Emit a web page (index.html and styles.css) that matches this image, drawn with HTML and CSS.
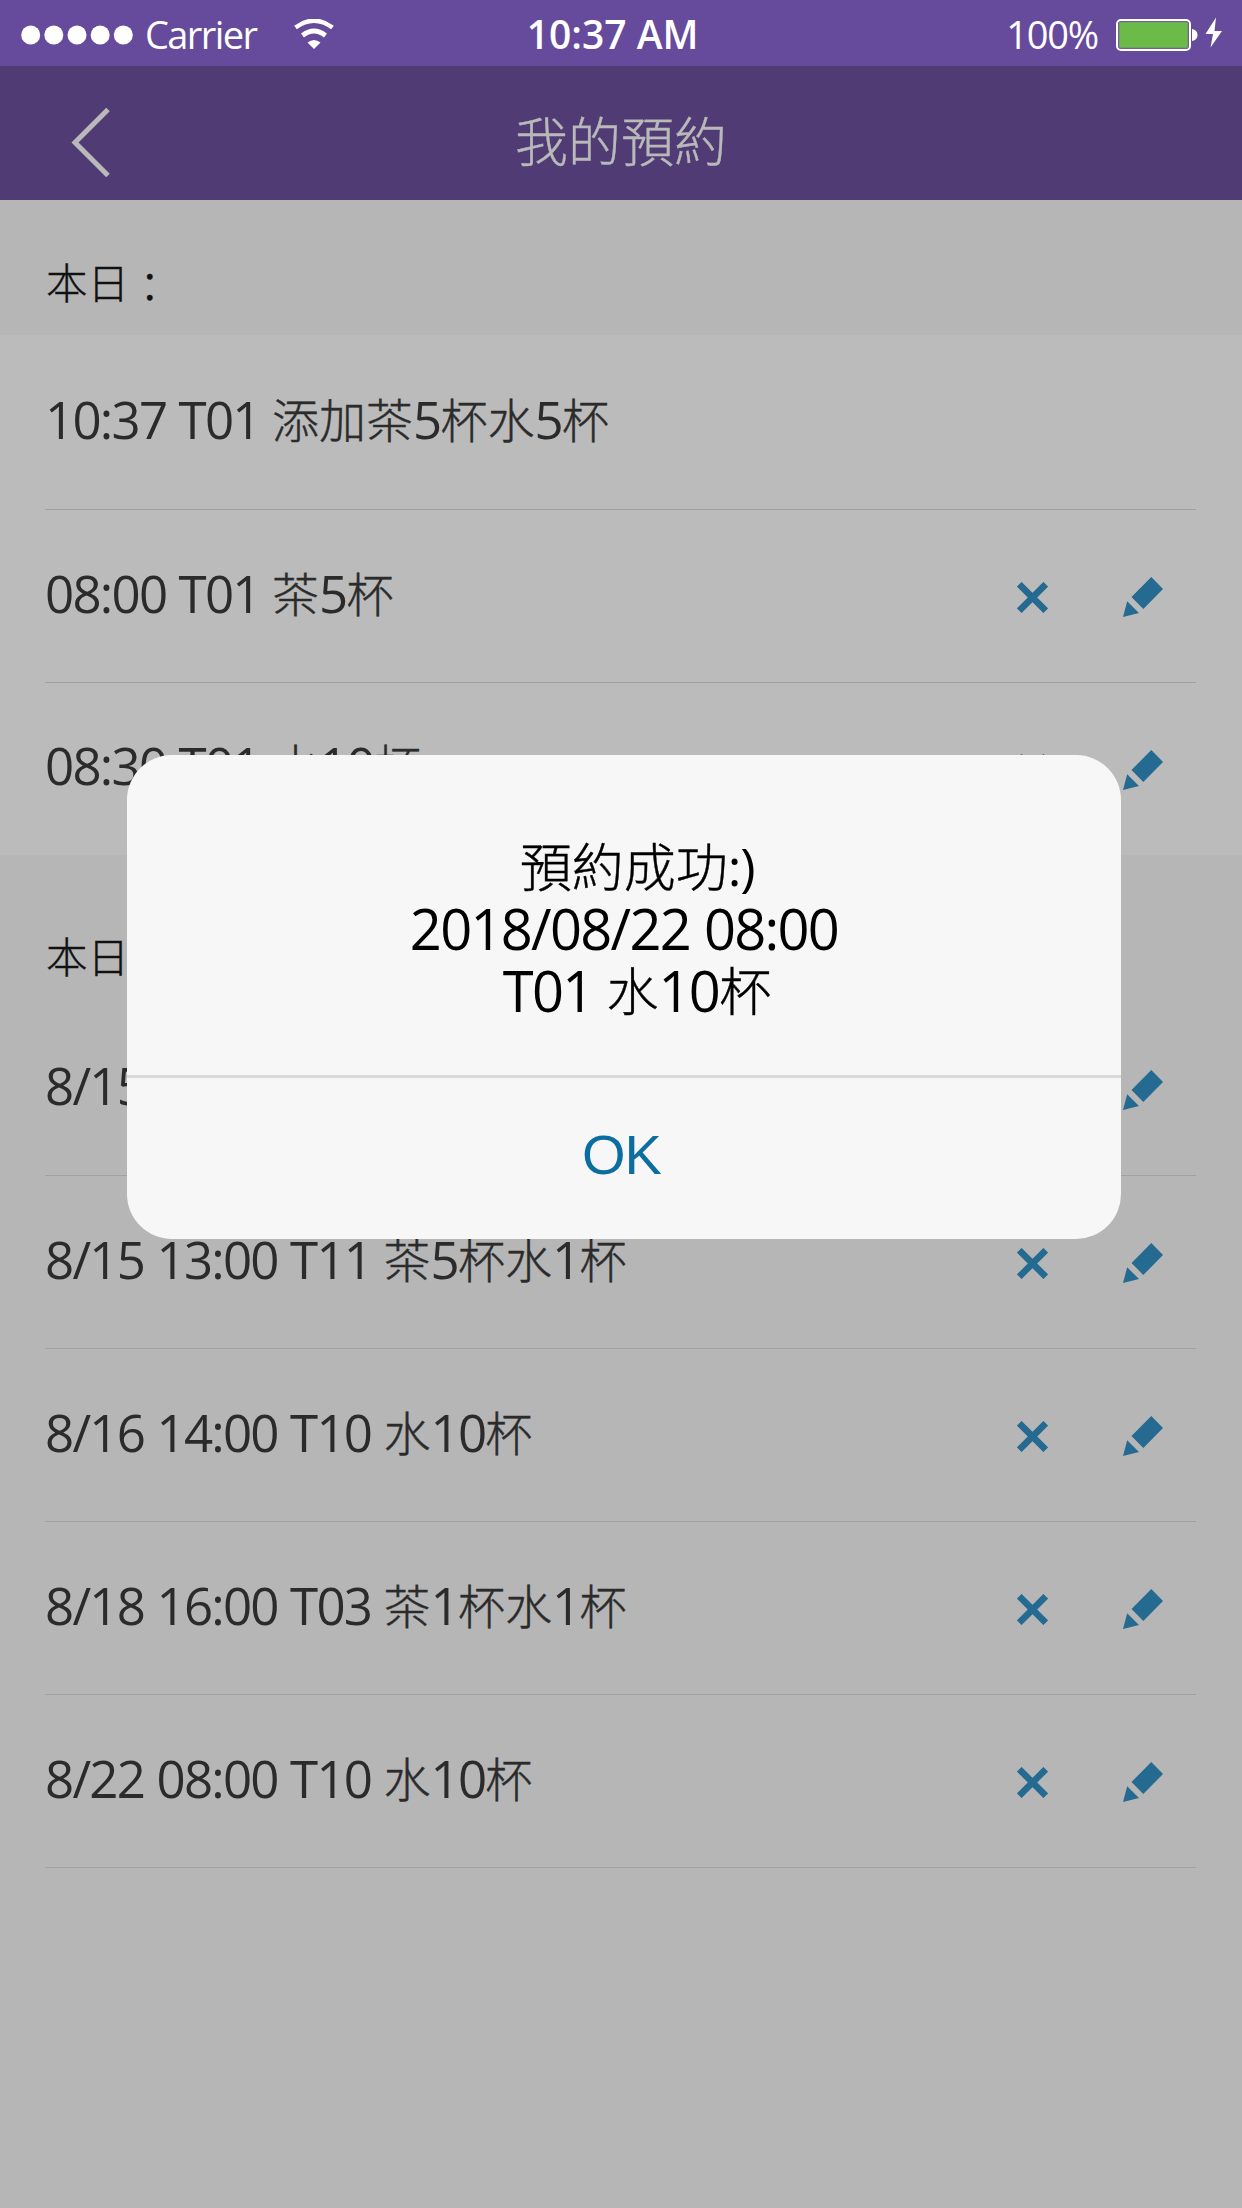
FILE: index.html
```html
<!DOCTYPE html>
<html lang="zh-Hant">
<head>
<meta charset="utf-8">
<title>我的預約</title>
<link rel="stylesheet" href="styles.css">
</head>
<body>
<svg class="defs" width="0" height="0" aria-hidden="true">
  <symbol id="cross" viewBox="0 0 30 30"><path d="M2.200 2.200 27.800 27.800M27.800 2.200 2.200 27.800" fill="none" stroke="currentColor" stroke-width="6.400"/></symbol>
  <symbol id="pencil" viewBox="0 0 40 40"><path d="M28.300 0 40 12 20.300 32 8.500 20ZM4.200 24.200 16 36 0 40Z" fill="currentColor"/></symbol>
</svg>
<div class="screen">
  <header class="status">
    <div class="status-left">
      <svg class="signal" width="112" height="20" viewBox="0 0 112 20" fill="#fff"><circle cx="9.700" cy="10" r="9.500"/><circle cx="32.800" cy="10" r="9.500"/><circle cx="56" cy="10" r="9.500"/><circle cx="79.200" cy="10" r="9.500"/><circle cx="102.300" cy="10" r="9.500"/></svg>
      <span class="carrier">Carrier</span>
      <svg class="wifi" width="40" height="30" viewBox="0 0 40 30"><path d="M1.500 8.500Q20-5 38.500 8.500" fill="none" stroke="#fff" stroke-width="4.600"/><path d="M8.500 16.500Q20 7.500 31.500 16.500" fill="none" stroke="#fff" stroke-width="4.800"/><path d="M13.500 23.500Q20 18.500 26.500 23.500L20 30Z" fill="#fff"/></svg>
    </div>
    <div class="clock">10:37 AM</div>
    <div class="status-right">
      <span class="percent">100%</span>
      <svg class="battery" width="107" height="34" viewBox="0 0 107 34"><rect x="1" y="3" width="73" height="30" rx="4" fill="none" stroke="#fff" stroke-width="2"/><rect x="3" y="5" width="69" height="26" rx="1.500" fill="#6cba48" stroke="#77808a" stroke-width="1"/><path d="M76 12Q81.500 13 81.500 18T76 24Z" fill="#fff"/><path d="M100 .5 89.500 17H97L94.500 30.500 106 14H98.500Z" fill="#fff"/></svg>
    </div>
  </header>
  <nav class="navbar">
    <svg class="back" width="40" height="71" viewBox="0 0 40 71"><path d="M37 2.500 4 35.500 37 68.500" fill="none" stroke="#b9b9b9" stroke-width="5"/></svg>
    <h1 class="title">我的預約</h1>
  </nav>
  <main>
    <h2 class="label label-first">本日<span class="colon">：</span></h2>
    <ul class="list today">
      <li class="row"><span class="text">10:37 T01 <b>添加茶</b>5<b>杯水</b>5<b>杯</b></span></li>
      <li class="row"><span class="text">08:00 T01 <b>茶</b>5<b>杯</b></span><svg class="cross"><use href="#cross"/></svg><svg class="pencil"><use href="#pencil"/></svg></li>
      <li class="row"><span class="text">08:30 T01 <b>水</b>10<b>杯</b></span><svg class="cross"><use href="#cross"/></svg><svg class="pencil"><use href="#pencil"/></svg></li>
    </ul>
    <h2 class="label label-later">本日後<span class="colon">：</span></h2>
    <ul class="list later">
      <li class="row"><span class="text">8/15 10:00 T01 <b>水</b>1<b>杯</b></span><svg class="cross"><use href="#cross"/></svg><svg class="pencil"><use href="#pencil"/></svg></li>
      <li class="row"><span class="text">8/15 13:00 T11 <b>茶</b>5<b>杯水</b>1<b>杯</b></span><svg class="cross"><use href="#cross"/></svg><svg class="pencil"><use href="#pencil"/></svg></li>
      <li class="row"><span class="text">8/16 14:00 T10 <b>水</b>10<b>杯</b></span><svg class="cross"><use href="#cross"/></svg><svg class="pencil"><use href="#pencil"/></svg></li>
      <li class="row"><span class="text">8/18 16:00 T03 <b>茶</b>1<b>杯水</b>1<b>杯</b></span><svg class="cross"><use href="#cross"/></svg><svg class="pencil"><use href="#pencil"/></svg></li>
      <li class="row"><span class="text">8/22 08:00 T10 <b>水</b>10<b>杯</b></span><svg class="cross"><use href="#cross"/></svg><svg class="pencil"><use href="#pencil"/></svg></li>
    </ul>
  </main>
  <div class="dialog" role="dialog">
    <div class="message">
      <p class="offset"><b>預約成功</b><span class="smile">:)</span></p>
      <p>2018/08/22 08:00</p>
      <p class="offset">T01 <b>水</b>10<b>杯</b></p>
    </div>
    <button class="ok">OK</button>
  </div>
</div>
</body>
</html>
```
FILE: styles.css
```css
* { box-sizing: border-box; margin: 0; padding: 0; }
body { background: #b6b6b6; font-family: "Open Sans", "Noto Sans CJK TC", sans-serif; }
.defs { position: absolute; }
.screen { position: relative; width: 1242px; height: 2208px; overflow: hidden; background: #b6b6b6; }

.status { display: grid; grid-template-columns: 1fr auto 1fr; height: 66px; background: #664a9c; color: #fff; line-height: 68px; white-space: nowrap; }
.status-left, .status-right { display: flex; align-items: center; }
.status-left { padding-left: 21px; }
.signal { margin-top: 2px; }
.carrier { width: 147px; padding-left: 12px; font-size: 38px; letter-spacing: -1.6px; }
.wifi { margin: 0 0 0 14px; }
.clock { padding-right: 17px; font-size: 39px; font-weight: 600; }
.status-right { justify-content: flex-end; padding-right: 19px; }
.percent { font-size: 38px; letter-spacing: -1.2px; margin-right: 18px; }

.navbar { display: flex; align-items: center; height: 134px; padding-left: 71px; background: #503b75; }
.back { margin-top: 18px; }
.title { flex: 1; padding: 12px 111px 0 0; text-align: center; font-family: "Noto Sans CJK TC", sans-serif; font-size: 53px; font-weight: 300; line-height: 60px; color: #b9b9b9; -webkit-text-stroke: 0.4px; }

.label { padding-left: 46px; font-family: "Noto Sans CJK TC", sans-serif; font-size: 41.5px; font-weight: 300; line-height: 60px; color: #111; -webkit-text-stroke: 0.4px; }
.label-first { height: 135px; padding-top: 51px; }
.label-later { height: 147px; padding-top: 70px; }
.colon { line-height: 1; vertical-align: -4px; }
.list { list-style: none; }
.today { background: #bbb; }
.row { display: flex; align-items: center; height: 173px; margin: 0 46px 0 45px; border-bottom: 1px solid #a1a1a1; color: #2b2b2b; }
.today .row:first-child { height: 175px; }
.today .row:last-child { height: 172px; border-bottom-color: transparent; }
.later .row:first-child { height: 174px; }
.text { flex: 1; padding-bottom: 7px; font-size: 51px; line-height: 160px; letter-spacing: -1.75px; word-spacing: 0.8px; white-space: nowrap; }
b { font-family: "Noto Sans CJK TC", sans-serif; font-size: 47px; font-weight: 300; line-height: 1; letter-spacing: 0; vertical-align: 1px; -webkit-text-stroke: 0.4px; }
.cross { width: 31px; height: 31px; margin: 2px 75px 0 0; color: #256a90; }
.pencil { width: 40px; height: 40px; margin: 2px 33px 0 0; color: #256a90; }

.dialog { position: absolute; left: 127px; top: 755px; display: flex; flex-direction: column; width: 994px; height: 484px; border-radius: 45px; background: #f7f7f7; color: #000; }
.message { height: 323px; padding-top: 80px; border-bottom: 3px solid #dadada; text-align: center; font-size: 56px; letter-spacing: -1.7px; word-spacing: 1px; }
.message p { height: 62px; line-height: 62px; }
.message b { font-size: 52px; }
.smile { font-size: 52px; line-height: 1; letter-spacing: -1.2px; vertical-align: 2px; }
.message .offset { padding-left: 26px; }
.ok { flex: 1; border: 0; background: none; padding: 0 5px 7px 0; font: 56px/1 "Liberation Sans", Arial, sans-serif; letter-spacing: -1px; color: #0c6da0; }
```
